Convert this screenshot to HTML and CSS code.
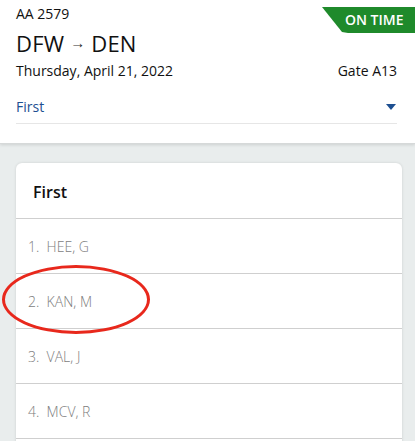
FILE: index.html
```html
<!DOCTYPE html>
<html>
<head>
<meta charset="utf-8">
<link rel="stylesheet" href="styles.css">
</head>
<body>
<header class="flight">
  <div class="badge">ON TIME</div>
  <div class="flight-no">AA 2579</div>
  <div class="route">DFW <span class="arrow">→</span> DEN</div>
  <div class="meta">
    <span>Thursday, April 21, 2022</span>
    <span>Gate A13</span>
  </div>
  <div class="select">
    <span>First</span>
    <svg class="caret" width="10" height="6" viewBox="0 0 10 6"><path d="M0 0H10L5 6Z" fill="#1d4f91"/></svg>
  </div>
</header>
<main class="content">
  <section class="card">
    <div class="card-title">First</div>
    <div class="row">1.&nbsp; HEE, G</div>
    <div class="row highlight">2.&nbsp; KAN, M<span class="circle"></span></div>
    <div class="row">3.&nbsp; VAL, J</div>
    <div class="row">4.&nbsp; MCV, R</div>
  </section>
</main>
</body>
</html>
```
FILE: styles.css
```css
* { box-sizing: border-box; }
html, body { margin: 0; padding: 0; }
body {
  width: 415px;
  height: 441px;
  overflow: hidden;
  font-family: "Open Sans", "Noto Sans", sans-serif;
  background: #e9eded;
  color: #111;
}
.flight {
  position: relative;
  background: #fff;
  padding: 4px 18px 0 16px;
  height: 144px;
  border-bottom: 1px solid #d6d9d9;
  box-shadow: 0 1px 3px rgba(0,0,0,0.12);
}
.badge {
  position: absolute;
  top: 7px;
  right: 0;
  width: 93px;
  height: 26px;
  background: #1f8a2b;
  color: #fff;
  font-size: 14px;
  font-weight: 600;
  line-height: 26px;
  padding-left: 23px;
  clip-path: polygon(0 0, 100% 0, 100% 100%, 26px 100%, 20px 96%);
  border-bottom-left-radius: 8px;
}
.flight-no {
  font-size: 14px;
  line-height: 20px;
}
.route {
  font-size: 22px;
  line-height: 30px;
  margin-top: 3px;
  letter-spacing: 0.2px;
}
.arrow { font-size: 15px; vertical-align: 4px; color: #333; font-weight: 300; }
.meta {
  display: flex;
  justify-content: space-between;
  font-size: 14px;
  line-height: 20px;
  margin-top: 3px;
}
.select {
  display: flex;
  justify-content: space-between;
  align-items: center;
  color: #1d4f91;
  font-size: 14px;
  line-height: 20px;
  margin-top: 16px;
  padding: 0 1px 6px 0;
  border-bottom: 1px solid #e6e6e6;
}
.content {
  padding: 19px 13px 0 16px;
}
.card {
  background: #fff;
  border-radius: 6px;
  box-shadow: 0 0 3px rgba(0,0,0,0.12);
  padding-bottom: 20px;
}
.card-title {
  height: 56px;
  padding: 19px 17px 0;
  font-size: 16px;
  font-weight: 600;
  line-height: 20px;
  border-bottom: 1px solid #cfcfcf;
}
.row {
  position: relative;
  height: 55px;
  padding: 18px 12px 0;
  font-size: 14px;
  font-weight: 300;
  line-height: 20px;
  color: #7d7d7d;
  border-bottom: 1px solid #cfcfcf;
}
.circle {
  position: absolute;
  left: -14px;
  top: -9px;
  width: 148px;
  height: 69px;
  border: 3px solid #e8281c;
  border-radius: 50%;
}
```
